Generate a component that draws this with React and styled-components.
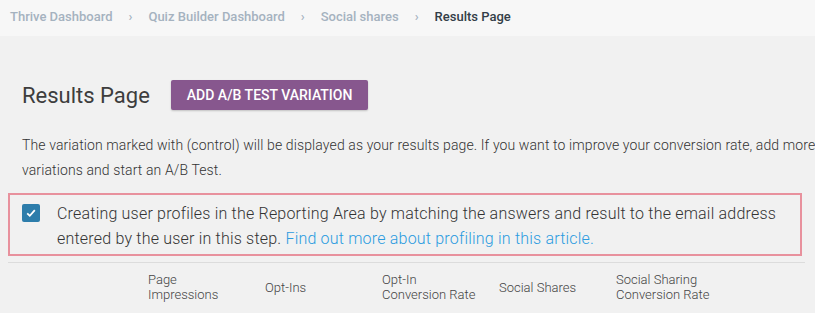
import styled, { createGlobalStyle } from "styled-components";

const GlobalStyle = createGlobalStyle`
  html, body {
    margin: 0;
    padding: 0;
    background: #f1f1f1;
    font-family: Roboto, "Liberation Sans", sans-serif;
    overflow: hidden;
  }
`;

const Page = styled.div`
  width: 815px;
  height: 313px;
  background: #f1f1f1;
`;

const Breadcrumbs = styled.nav`
  height: 36px;
  background: #f7f7f7;
  display: flex;
  align-items: center;
  padding: 0 0 4px 10px;
  box-sizing: border-box;
  font-size: 13px;
  font-weight: 500;
`;

const Crumb = styled.span`
  color: ${(p) => (p.$active ? "#333d47" : "#a5b2bf")};
`;

const Sep = styled.span`
  color: #a5b2bf;
  font-size: 13px;
  margin: 0 16px;
`;

const Content = styled.div`
  padding: 0 8px;
`;

const Header = styled.div`
  display: flex;
  align-items: center;
  gap: 21px;
  padding: 44px 0 0 14px;
`;

const Title = styled.h1`
  margin: 0;
  font-size: 22px;
  font-weight: 400;
  color: #3d3d3d;
`;

const Button = styled.button`
  height: 30px;
  padding: 0 16px;
  border: none;
  border-radius: 2px;
  background: #87578e;
  color: #fff;
  font-family: inherit;
  font-size: 14px;
  font-weight: 500;
  text-transform: uppercase;
  box-shadow: 0 1px 2px rgba(0, 0, 0, 0.2);
`;

const Intro = styled.p`
  margin: 23px 0 0 14px;
  font-size: 14px;
  font-weight: 300;
  letter-spacing: 0.11px;
  line-height: 25px;
  color: #333;
  white-space: nowrap;
`;

const Notice = styled.label`
  display: flex;
  align-items: flex-start;
  gap: 17px;
  margin-top: 10px;
  width: 794px;
  box-sizing: border-box;
  border: 2px solid #e8919d;
  padding: 6px 12px 3px 12px;
`;

const Check = styled.span`
  flex: none;
  width: 18px;
  height: 18px;
  margin-top: 3px;
  border-radius: 2px;
  background: #2d7dab;
  display: flex;
  align-items: center;
  justify-content: center;
`;

const NoticeText = styled.span`
  font-size: 16px;
  font-weight: 300;
  letter-spacing: 0.2px;
  line-height: 25px;
  color: #333;
`;

const Link = styled.a`
  color: #2a9be0;
  text-decoration: none;
`;

const Divider = styled.hr`
  margin: 6px 0 0 0;
  width: 797px;
  border: none;
  border-top: 1px solid #dcdcdc;
`;

const Columns = styled.div`
  display: grid;
  grid-template-columns: repeat(5, 117px);
  align-items: center;
  padding: 9px 0 0 140px;
`;

const Col = styled.div`
  font-size: 13px;
  font-weight: 300;
  line-height: 15px;
  color: #444;
`;

const columns = [
  ["Page", "Impressions"],
  ["Opt-Ins"],
  ["Opt-In", "Conversion Rate"],
  ["Social Shares"],
  ["Social Sharing", "Conversion Rate"],
];

export default function App() {
  return (
    <Page>
      <GlobalStyle />
      <Breadcrumbs>
        <Crumb>Thrive Dashboard</Crumb>
        <Sep>›</Sep>
        <Crumb>Quiz Builder Dashboard</Crumb>
        <Sep>›</Sep>
        <Crumb>Social shares</Crumb>
        <Sep>›</Sep>
        <Crumb $active>Results Page</Crumb>
      </Breadcrumbs>
      <Content>
        <Header>
          <Title>Results Page</Title>
          <Button>Add A/B Test Variation</Button>
        </Header>
        <Intro>
          The variation marked with (control) will be displayed as your results page. If you want to improve your conversion rate, add more
          <br />
          variations and start an A/B Test.
        </Intro>
        <Notice>
          <Check>
            <svg width="12" height="12" viewBox="0 0 12 12">
              <path d="M2.2 6.3 L4.8 8.8 L9.8 3.2" fill="none" stroke="#fff" strokeWidth="1.8" />
            </svg>
          </Check>
          <NoticeText>
            Creating user profiles in the Reporting Area by matching the answers and result to the email address
            <br />
            entered by the user in this step. <Link href="#">Find out more about profiling in this article.</Link>
          </NoticeText>
        </Notice>
        <Divider />
        <Columns>
          {columns.map((lines, i) => (
            <Col key={i}>
              {lines.map((l, j) => (
                <div key={j}>{l}</div>
              ))}
            </Col>
          ))}
        </Columns>
      </Content>
    </Page>
  );
}
